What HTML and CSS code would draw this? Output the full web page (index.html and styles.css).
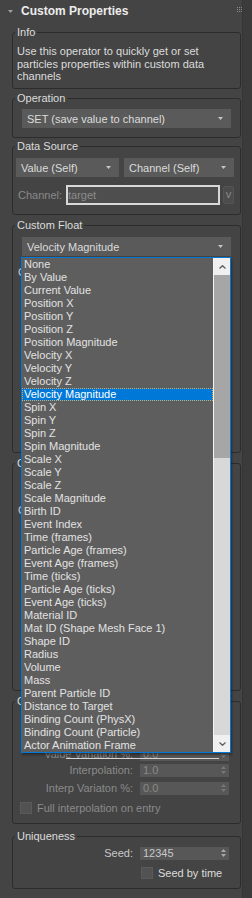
FILE: index.html
```html
<!DOCTYPE html>
<html>
<head>
<meta charset="utf-8">
<title>Custom Properties</title>
<link rel="stylesheet" href="styles.css">
</head>
<body>
<div class="app">
  <div class="panel">
    <div class="rhead">
      <svg class="tri" width="5" height="3" viewBox="0 0 5 3"><path d="M0 0H5L2.5 3Z" fill="#a0a0a0"/></svg>
      <span class="rtitle">Custom Properties</span>
      <svg class="grip" width="5" height="5" viewBox="0 0 5 5" fill="#8a8a8a">
        <rect x="0" y="0" width="1" height="1"/><rect x="2" y="0" width="1" height="1"/><rect x="4" y="0" width="1" height="1"/>
        <rect x="0" y="2" width="1" height="1"/><rect x="2" y="2" width="1" height="1"/><rect x="4" y="2" width="1" height="1"/>
        <rect x="0" y="4" width="1" height="1"/><rect x="2" y="4" width="1" height="1"/><rect x="4" y="4" width="1" height="1"/>
      </svg>
    </div>

    <section class="group g-info">
      <div class="gtitle">Info</div>
      <p class="info">Use this operator to quickly get or set particles properties within custom data channels</p>
    </section>

    <section class="group g-op">
      <div class="gtitle">Operation</div>
      <div class="dd dd-wide"><span>SET (save value to channel)</span><svg class="arr" width="5" height="3" viewBox="0 0 5 3"><path d="M0 0H5L2.5 3Z"/></svg></div>
    </section>

    <section class="group g-ds">
      <div class="gtitle">Data Source</div>
      <div class="ddrow">
        <div class="dd dd-a"><span>Value (Self)</span><svg class="arr" width="5" height="3" viewBox="0 0 5 3"><path d="M0 0H5L2.5 3Z"/></svg></div>
        <div class="dd dd-b"><span>Channel (Self)</span><svg class="arr" width="5" height="3" viewBox="0 0 5 3"><path d="M0 0H5L2.5 3Z"/></svg></div>
      </div>
      <div class="chrow">
        <span class="chlabel">Channel:</span>
        <div class="tinput">target</div>
        <div class="vbtn">v</div>
      </div>
    </section>

    <section class="group g-cf">
      <div class="gtitle">Custom Float</div>
      <div class="ddwrap">
        <div class="dd dd-wide"><span>Velocity Magnitude</span><svg class="arr" width="5" height="3" viewBox="0 0 5 3"><path d="M0 0H5L2.5 3Z"/></svg></div>
        <div class="popup">
          <ul class="items">
            <li>None</li>
            <li>By Value</li>
            <li>Current Value</li>
            <li>Position X</li>
            <li>Position Y</li>
            <li>Position Z</li>
            <li>Position Magnitude</li>
            <li>Velocity X</li>
            <li>Velocity Y</li>
            <li>Velocity Z</li>
            <li class="sel">Velocity Magnitude</li>
            <li>Spin X</li>
            <li>Spin Y</li>
            <li>Spin Z</li>
            <li>Spin Magnitude</li>
            <li>Scale X</li>
            <li>Scale Y</li>
            <li>Scale Z</li>
            <li>Scale Magnitude</li>
            <li>Birth ID</li>
            <li>Event Index</li>
            <li>Time (frames)</li>
            <li>Particle Age (frames)</li>
            <li>Event Age (frames)</li>
            <li>Time (ticks)</li>
            <li>Particle Age (ticks)</li>
            <li>Event Age (ticks)</li>
            <li>Material ID</li>
            <li>Mat ID (Shape Mesh Face 1)</li>
            <li>Shape ID</li>
            <li>Radius</li>
            <li>Volume</li>
            <li>Mass</li>
            <li>Parent Particle ID</li>
            <li>Distance to Target</li>
            <li>Binding Count (PhysX)</li>
            <li>Binding Count (Particle)</li>
            <li>Actor Animation Frame</li>
          </ul>
          <div class="sb">
            <div class="sbbtn"><svg width="7" height="4" viewBox="0 0 7 4"><path d="M0.5 3.5L3.5 0.7L6.5 3.5" fill="none" stroke="#606060" stroke-width="1.3"/></svg></div>
            <div class="thumb"></div>
            <div class="track"></div>
            <div class="sbbtn"><svg width="7" height="4" viewBox="0 0 7 4"><path d="M0.5 0.5L3.5 3.3L6.5 0.5" fill="none" stroke="#606060" stroke-width="1.3"/></svg></div>
          </div>
        </div>
      </div>
      <div class="chrow chrow-cf">
        <span class="chlabel lit">C</span>
      </div>
    </section>

    <section class="group g-cv">
      <div class="gtitle">C</div>
      <div class="dd dd-wide"></div>
      <div class="chrow chrow-cf">
        <span class="chlabel lit">C</span>
      </div>
    </section>

    <section class="group g-interp">
      <div class="gtitle">C</div>
      <div class="frow off row-var"><span class="flabel">Value Variation %:</span><div class="field"><span>0.0</span><svg class="spin" width="5" height="8" viewBox="0 0 5 8"><path d="M0 3H5L2.5 0Z M0 5H5L2.5 8Z"/></svg></div></div>
      <div class="frow off row-int"><span class="flabel">Interpolation:</span><div class="field"><span>1.0</span><svg class="spin" width="5" height="8" viewBox="0 0 5 8"><path d="M0 3H5L2.5 0Z M0 5H5L2.5 8Z"/></svg></div></div>
      <div class="frow off"><span class="flabel">Interp Variaton %:</span><div class="field"><span>0.0</span><svg class="spin" width="5" height="8" viewBox="0 0 5 8"><path d="M0 3H5L2.5 0Z M0 5H5L2.5 8Z"/></svg></div></div>
      <div class="cbrow off"><span class="cb"></span><span>Full interpolation on entry</span></div>
    </section>

    <section class="group g-uniq">
      <div class="gtitle">Uniqueness</div>
      <div class="frow"><span class="flabel">Seed:</span><div class="field"><span>12345</span><svg class="spin" width="5" height="8" viewBox="0 0 5 8"><path d="M0 3H5L2.5 0Z M0 5H5L2.5 8Z"/></svg></div></div>
      <div class="frow"><span></span><div class="cbrow cbrow-seed"><span class="cb"></span><span>Seed by time</span></div></div>
    </section>
  </div>
  <div class="strip"></div>
</div>
</body>
</html>
```

FILE: styles.css
```css
* { box-sizing: border-box; }
html, body { margin: 0; padding: 0; }
body {
  background: #444444;
  font-family: "Liberation Sans", Arial, sans-serif;
  font-size: 11px;
  color: #dcdcdc;
}
.app { display: flex; width: 252px; height: 898px; overflow: hidden; }
.panel { width: 242px; flex: none; background: #444444; }
.strip { flex: 1; background: #3b3b3b; border-left: 1px solid #363636; }

.rhead { display: flex; align-items: center; height: 24px; padding-left: 8px; padding-bottom: 2px; }
.tri { margin-right: 8px; }
.rtitle { font-weight: bold; font-size: 12px; color: #ececec; }
.grip { margin-left: auto; margin-right: 0; margin-top: -4px; }

.group {
  margin-left: 12px;
  width: 229px;
  border: 1px solid #2c2c2c;
  border-radius: 3px;
}
.gtitle {
  margin-top: -7px;
  margin-left: 2px;
  padding: 0 2px;
  width: max-content;
  height: 13px;
  line-height: 13px;
  background: #444444;
  color: #dcdcdc;
}
.g-info { margin-top: 8px; height: 57px; }
.info { margin: 6px 0 0; padding: 0 4px; line-height: 12.5px; }
.g-op { margin-top: 9px; height: 40px; }
.g-op .dd { margin-top: 4px; }
.g-ds { margin-top: 8px; height: 69px; }
.g-cf { margin-top: 10px; height: 228px; }
.g-cv { margin-top: 10px; height: 228px; }
.g-cv .dd { margin-top: 5px; }
.g-interp { margin-top: 10px; height: 123px; }
.g-uniq { margin-top: 12px; height: 53px; }

.dd {
  display: flex;
  align-items: center;
  justify-content: space-between;
  height: 19px;
  background: #5a5a5a;
  padding: 0 8px 0 5px;
  color: #dcdcdc;
}
.dd .arr { fill: #c4c4c4; }
.dd-wide { margin-left: 9px; width: 209px; }
.ddrow { display: flex; gap: 5px; margin-top: 5px; margin-left: 3px; }
.dd-a { width: 103px; }
.dd-b { width: 110px; }

.chrow { display: flex; align-items: center; margin-top: 8px; margin-left: 5px; height: 20px; }
.chlabel { width: 48px; color: #8a8a8a; }
.chlabel.lit { color: #c8c8c8; }
.tinput {
  width: 154px;
  height: 20px;
  border: 2px solid #d8d8d8;
  background: #4e4e4e;
  color: #8c8c8c;
  line-height: 16px;
  padding-left: 0;
}
.vbtn {
  margin-left: 3px;
  width: 11px;
  height: 18px;
  background: #4c4c4c;
  border: 1px solid #555;
  border-radius: 2px;
  color: #8a8a8a;
  text-align: center;
  line-height: 15px;
}

.ddwrap { position: relative; margin-top: 5px; }
.popup {
  position: absolute;
  top: 20px;
  left: 8px;
  width: 210px;
  height: 496px;
  border: 1px solid #0078d7;
  background: #5e5e5e;
  display: flex;
  z-index: 10;
  box-shadow: 1px 2px 2px rgba(0, 0, 0, 0.35);
}
.items { list-style: none; margin: 0; padding: 0; width: 191px; }
.items li {
  height: 13px;
  line-height: 13px;
  padding-left: 2px;
  white-space: nowrap;
  color: #e2e2e2;
}
.items li.sel {
  background: #0078d7;
  color: #ffffff;
  outline: 1px dotted #f4a23a;
  outline-offset: -1px;
}
.sb {
  width: 17px;
  display: flex;
  flex-direction: column;
  border-left: 1px solid #f4f4f4;
  background: #d8d8d8;
}
.sbbtn {
  height: 17px;
  background: #f0f0f0;
  display: flex;
  align-items: center;
  justify-content: center;
  flex: none;
}
.thumb { height: 183px; background: #a6a6a6; flex: none; }
.track { flex: 1; }

.chrow-cf { margin-top: 6px; }

.frow {
  display: grid;
  grid-template-columns: 120px 89px;
  column-gap: 7px;
  align-items: center;
  height: 20px;
}
.flabel { text-align: right; color: #c8c8c8; }
.field {
  height: 13px;
  background: #575757;
  display: flex;
  align-items: center;
  justify-content: space-between;
  padding: 0 3px 0 3px;
  color: #c8c8c8;
}
.spin { fill: #a8a8a8; }
.off .flabel, .off .field, .off { color: #8a8a8a; }
.off .spin { fill: #777777; }

.g-interp .row-var { margin-top: 38px; height: 16px; position: relative; }
.g-interp .row-var::after {
  content: "";
  position: absolute;
  left: 53px;
  top: 12px;
  width: 153px;
  height: 1px;
  background: #d4d4d4;
}
.g-interp .row-int { height: 16px; }
.cbrow { display: flex; align-items: center; gap: 5px; height: 20px; margin-left: 7px; }
.cb {
  width: 12px;
  height: 12px;
  background: #525252;
  border: 1px solid #5a5a5a;
  flex: none;
}
.g-uniq .frow:first-of-type { margin-top: 3px; }
.cbrow-seed { margin-left: 1px; color: #dcdcdc; }
```
